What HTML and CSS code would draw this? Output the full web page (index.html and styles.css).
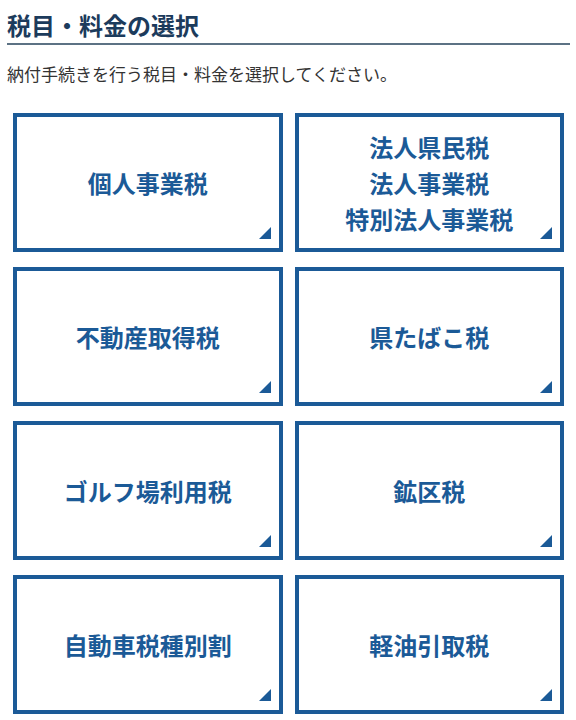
FILE: index.html
```html
<!DOCTYPE html>
<html lang="ja">
<head>
<meta charset="utf-8">
<title>税目・料金の選択</title>
<link rel="stylesheet" href="styles.css">
</head>
<body>
<div class="page">
  <h1 class="title">税目・料金の選択</h1>
  <p class="lead">納付手続きを行う税目・料金を選択してください。</p>
  <div class="grid">
    <a class="card" href="#"><span class="label">個人事業税</span></a>
    <a class="card" href="#"><span class="label">法人県民税<br>法人事業税<br>特別法人事業税</span></a>
    <a class="card" href="#"><span class="label">不動産取得税</span></a>
    <a class="card" href="#"><span class="label">県たばこ税</span></a>
    <a class="card" href="#"><span class="label">ゴルフ場利用税</span></a>
    <a class="card" href="#"><span class="label">鉱区税</span></a>
    <a class="card" href="#"><span class="label">自動車税種別割</span></a>
    <a class="card" href="#"><span class="label">軽油引取税</span></a>
  </div>
</div>
</body>
</html>
```
FILE: styles.css
```css
html, body {
  margin: 0;
  padding: 0;
  background: #ffffff;
}
body {
  font-family: "Noto Sans CJK JP", "Noto Sans", sans-serif;
}
.page {
  padding: 0 6px 0 7px;
}
.title {
  margin: 0;
  padding-top: 8px;
  font-size: 24px;
  line-height: 34px;
  font-weight: 700;
  color: #1c3b5c;
  border-bottom: 2px solid #5c7284;
  padding-bottom: 1px;
}
.lead {
  margin: 17px 0 0 0;
  font-size: 17px;
  line-height: 24px;
  color: #333333;
}
.grid {
  display: grid;
  grid-template-columns: 1fr 1fr;
  column-gap: 12px;
  row-gap: 15px;
  margin: 27px 6px 0 6px;
}
.card {
  position: relative;
  box-sizing: border-box;
  height: 139px;
  border: 4px solid #1b5a97;
  display: flex;
  align-items: center;
  justify-content: center;
  text-align: center;
  text-decoration: none;
  color: #1b5a97;
  background: #ffffff;
}
.label {
  font-size: 24px;
  font-weight: 700;
  line-height: 36px;
}
.card::after {
  content: "";
  position: absolute;
  right: 8px;
  bottom: 9px;
  width: 0;
  height: 0;
  border-left: 12px solid transparent;
  border-bottom: 12px solid #1b5a97;
}
```
